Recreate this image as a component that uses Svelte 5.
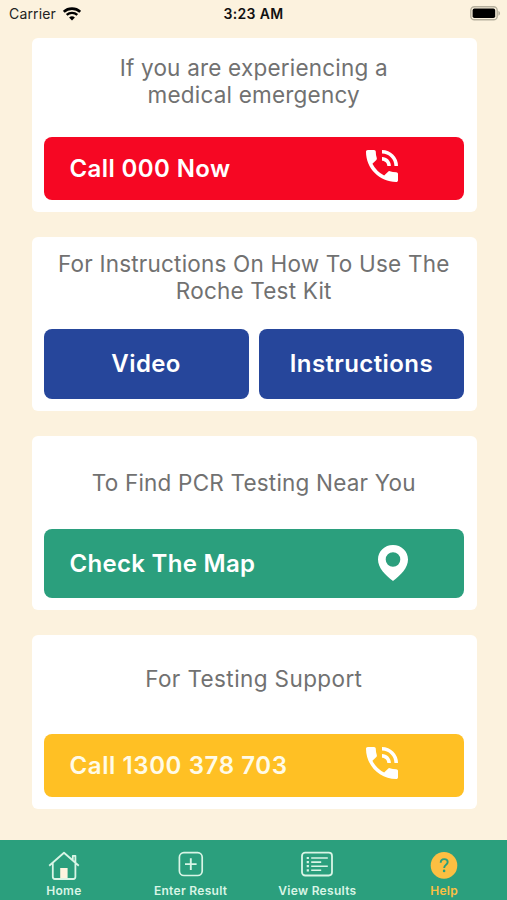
<script lang="ts">
	type Tab = {
		id: 'home' | 'enter' | 'results' | 'help';
		label: string;
	};

	const tabs: Tab[] = [
		{ id: 'home', label: 'Home' },
		{ id: 'enter', label: 'Enter Result' },
		{ id: 'results', label: 'View Results' },
		{ id: 'help', label: 'Help' }
	];

	let active = $state<Tab['id']>('help');
</script>

{#snippet phone()}
	<svg class="phone-icon" viewBox="3 3 18 18" aria-hidden="true">
		<path
			fill="currentColor"
			d="M20 15.5c-1.25 0-2.45-.2-3.57-.57a1.02 1.02 0 0 0-1.02.24l-2.2 2.2a15.05 15.05 0 0 1-6.59-6.59l2.2-2.21c.28-.26.36-.65.25-1A11.36 11.36 0 0 1 8.5 4c0-.55-.45-1-1-1H4c-.55 0-1 .45-1 1 0 9.39 7.61 17 17 17 .55 0 1-.45 1-1v-3.5c0-.55-.45-1-1-1zM19 12h2a9 9 0 0 0-9-9v2c3.87 0 7 3.13 7 7zm-4 0h2c0-2.76-2.24-5-5-5v2c1.66 0 3 1.34 3 3z"
		/>
	</svg>
{/snippet}

<div class="screen">
	<header class="status-bar">
		<div class="carrier">
			<span>Carrier</span>
			<svg width="18" height="14" viewBox="0 0 18 14" fill="none" aria-hidden="true">
				<path d="M.8 4.8C5.3.6 12.7.6 17.2 4.8" stroke="#000" stroke-width="2.6" />
				<path d="M3.7 7.9c3-2.7 7.6-2.7 10.6 0" stroke="#000" stroke-width="2.4" />
				<path d="M6.1 10.4c1.7-1.5 4.1-1.5 5.8 0L9 13.4z" fill="#000" />
			</svg>
		</div>
		<span class="time">3:23 AM</span>
		<svg class="battery" width="31" height="15" viewBox="0 0 31 15" aria-hidden="true">
			<rect x=".8" y=".8" width="26.4" height="13" rx="3.6" fill="none" stroke="#b5af9d" stroke-width="1.4" />
			<rect x="2.6" y="2.6" width="22.6" height="9.4" rx="1.8" />
			<path d="M28.4 5c2.2.7 2.2 4 0 4.7z" fill="#b5af9d" />
		</svg>
	</header>

	<main class="cards">
		<section class="card">
			<h2>If you are experiencing a<br />medical emergency</h2>
			<button type="button" class="action emergency">
				<span>Call 000 Now</span>
				{@render phone()}
			</button>
		</section>

		<section class="card kit">
			<h2>For Instructions On How To Use The<br />Roche Test Kit</h2>
			<div class="pair">
				<button type="button" class="action guide">Video</button>
				<button type="button" class="action guide">Instructions</button>
			</div>
		</section>

		<section class="card map">
			<h2>To Find PCR Testing Near You</h2>
			<button type="button" class="action locate">
				<span>Check The Map</span>
				<svg class="pin-icon" viewBox="0 0 30 36" aria-hidden="true">
					<path
						fill="currentColor"
						fill-rule="evenodd"
						d="M15 0C6.6 0 0 6.3 0 14.5 0 23 7.2 30 15 36c7.8-6 15-13 15-21.5C30 6.3 23.4 0 15 0zm0 7.2a7.3 7.3 0 1 1 0 14.6 7.3 7.3 0 0 1 0-14.6z"
					/>
				</svg>
			</button>
		</section>

		<section class="card support">
			<h2>For Testing Support</h2>
			<button type="button" class="action support-call">
				<span>Call 1300 378 703</span>
				{@render phone()}
			</button>
		</section>
	</main>

	<nav class="tab-bar">
		{#each tabs as tab (tab.id)}
			<button type="button" class="tab" class:active={active === tab.id} onclick={() => (active = tab.id)}>
				<svg width="32" height="30" viewBox="0 0 32 30" fill="none" stroke="currentColor" aria-hidden="true">
					{#if tab.id === 'home'}
						<path
							d="M1.2 14.8 16 1.8l14.8 13M4.8 12v13.8c0 1.5.6 2.2 2 2.2h18.6c1.4 0 2-.7 2-2.2V12M24.8 9.2V4.8h2.6v7"
							stroke-width="1.8"
							stroke-linejoin="round"
						/>
						<path d="M12.2 27.2V17h7.4v10.2z" fill="#fff3df" stroke="none" />
					{:else if tab.id === 'enter'}
						<rect x="4.4" y="1.7" width="22.8" height="22.8" rx="4.5" stroke-width="1.7" />
						<path d="M15.8 7.3v11.6M10 13.1h11.6" stroke-width="1.9" />
					{:else if tab.id === 'results'}
						<rect x="1" y="1.7" width="30" height="22.8" rx="3.2" stroke-width="1.8" />
						<path d="M10.2 7h16.6M10.2 11.1h10M10.2 15.2h16.6M10.2 19.3h10" stroke-width="1.6" />
						<path d="M5.7 7h2.2M5.7 11.1h2.2M5.7 15.2h2.2M5.7 19.3h2.2" stroke-width="2.2" />
					{:else}
						<circle cx="16" cy="14.4" r="13.3" fill="currentColor" stroke="none" />
						<path
							d="M12.7 11.8c0-2.3 1.3-3.7 3.5-3.7 2.1 0 3.5 1.2 3.5 3 0 1.4-.8 2.1-1.9 2.9-1.2.9-1.6 1.4-1.6 2.9"
							stroke="#2b9f7d"
							stroke-width="1.9"
						/>
						<circle cx="16.1" cy="19.9" r="1.3" fill="#2b9f7d" stroke="none" />
					{/if}
				</svg>
				<span>{tab.label}</span>
			</button>
		{/each}
	</nav>
</div>

<style>
	:global(body) {
		margin: 0;
	}

	.screen {
		display: flex;
		flex-direction: column;
		height: 900px;
		overflow: hidden;
		background: #fcf2de;
		font-family: Inter, 'Liberation Sans', sans-serif;
	}

	.status-bar {
		display: grid;
		grid-template-columns: 1fr auto 1fr;
		align-items: center;
		box-sizing: border-box;
		height: 37.5px;
		padding: 0 6px 10.5px 9px;
		font-size: 14px;
		color: #222;
	}

	.carrier {
		display: flex;
		align-items: center;
		gap: 7px;
		letter-spacing: 0.15px;
	}

	.time {
		margin-right: 3px;
		font-weight: 600;
		letter-spacing: 0.35px;
		color: #111;
	}

	.battery {
		justify-self: end;
	}

	.cards {
		flex: 1;
		display: flex;
		flex-direction: column;
		gap: 24.5px;
		padding: 0 30.5px 0 31.5px;
	}

	.card {
		display: flex;
		flex-direction: column;
		justify-content: space-between;
		box-sizing: border-box;
		height: 174.5px;
		padding: 16px 12.5px 12.5px 12px;
		border-radius: 6px;
		background: #fff;
	}

	.card.kit {
		padding-top: 13px;
	}

	.card.map {
		padding-top: 33px;
	}

	.card.support {
		padding-top: 30px;
	}

	h2 {
		margin: 0;
		font-size: 22.5px;
		font-weight: 400;
		line-height: 27.5px;
		letter-spacing: 0.2px;
		text-align: center;
		white-space: nowrap;
		color: #717171;
	}

	.support h2 {
		letter-spacing: 0.4px;
	}

	button {
		border: 0;
		font-family: inherit;
		cursor: pointer;
	}

	.action {
		display: flex;
		align-items: center;
		justify-content: space-between;
		box-sizing: border-box;
		height: 62.5px;
		padding: 0 66px 0 26px;
		border-radius: 8px;
		font-size: 24px;
		font-weight: 600;
		letter-spacing: 0.4px;
		color: #fff;
	}

	.emergency {
		background: #f60723;
	}

	.pair {
		display: grid;
		grid-template-columns: 1fr 1fr;
		gap: 10px;
	}

	.guide {
		justify-content: center;
		height: 70px;
		padding: 0;
		background: #26469b;
	}

	.locate {
		height: 68.5px;
		padding-right: 56px;
		background: #2b9f7d;
		letter-spacing: 0.3px;
	}

	.support-call {
		background: #ffc024;
		color: #fffbe8;
		letter-spacing: 0.6px;
	}

	.action span {
		padding-top: 1px;
	}

	.phone-icon {
		width: 32px;
		height: 32px;
		margin-bottom: 5px;
		color: #fff;
	}

	.pin-icon {
		width: 30px;
		height: 36px;
		margin-bottom: 1px;
		color: #fff;
	}

	.tab-bar {
		display: grid;
		grid-template-columns: repeat(4, 1fr);
		height: 60px;
		background: #2b9f7d;
	}

	.tab {
		display: flex;
		flex-direction: column;
		align-items: center;
		gap: 2px;
		padding: 11px 0 0 1px;
		background: none;
		font-size: 12px;
		font-weight: 600;
		line-height: 15px;
		letter-spacing: 0.3px;
		white-space: nowrap;
		color: #d9f5e6;
	}

	.tab.active {
		color: #fcbf42;
	}
</style>
